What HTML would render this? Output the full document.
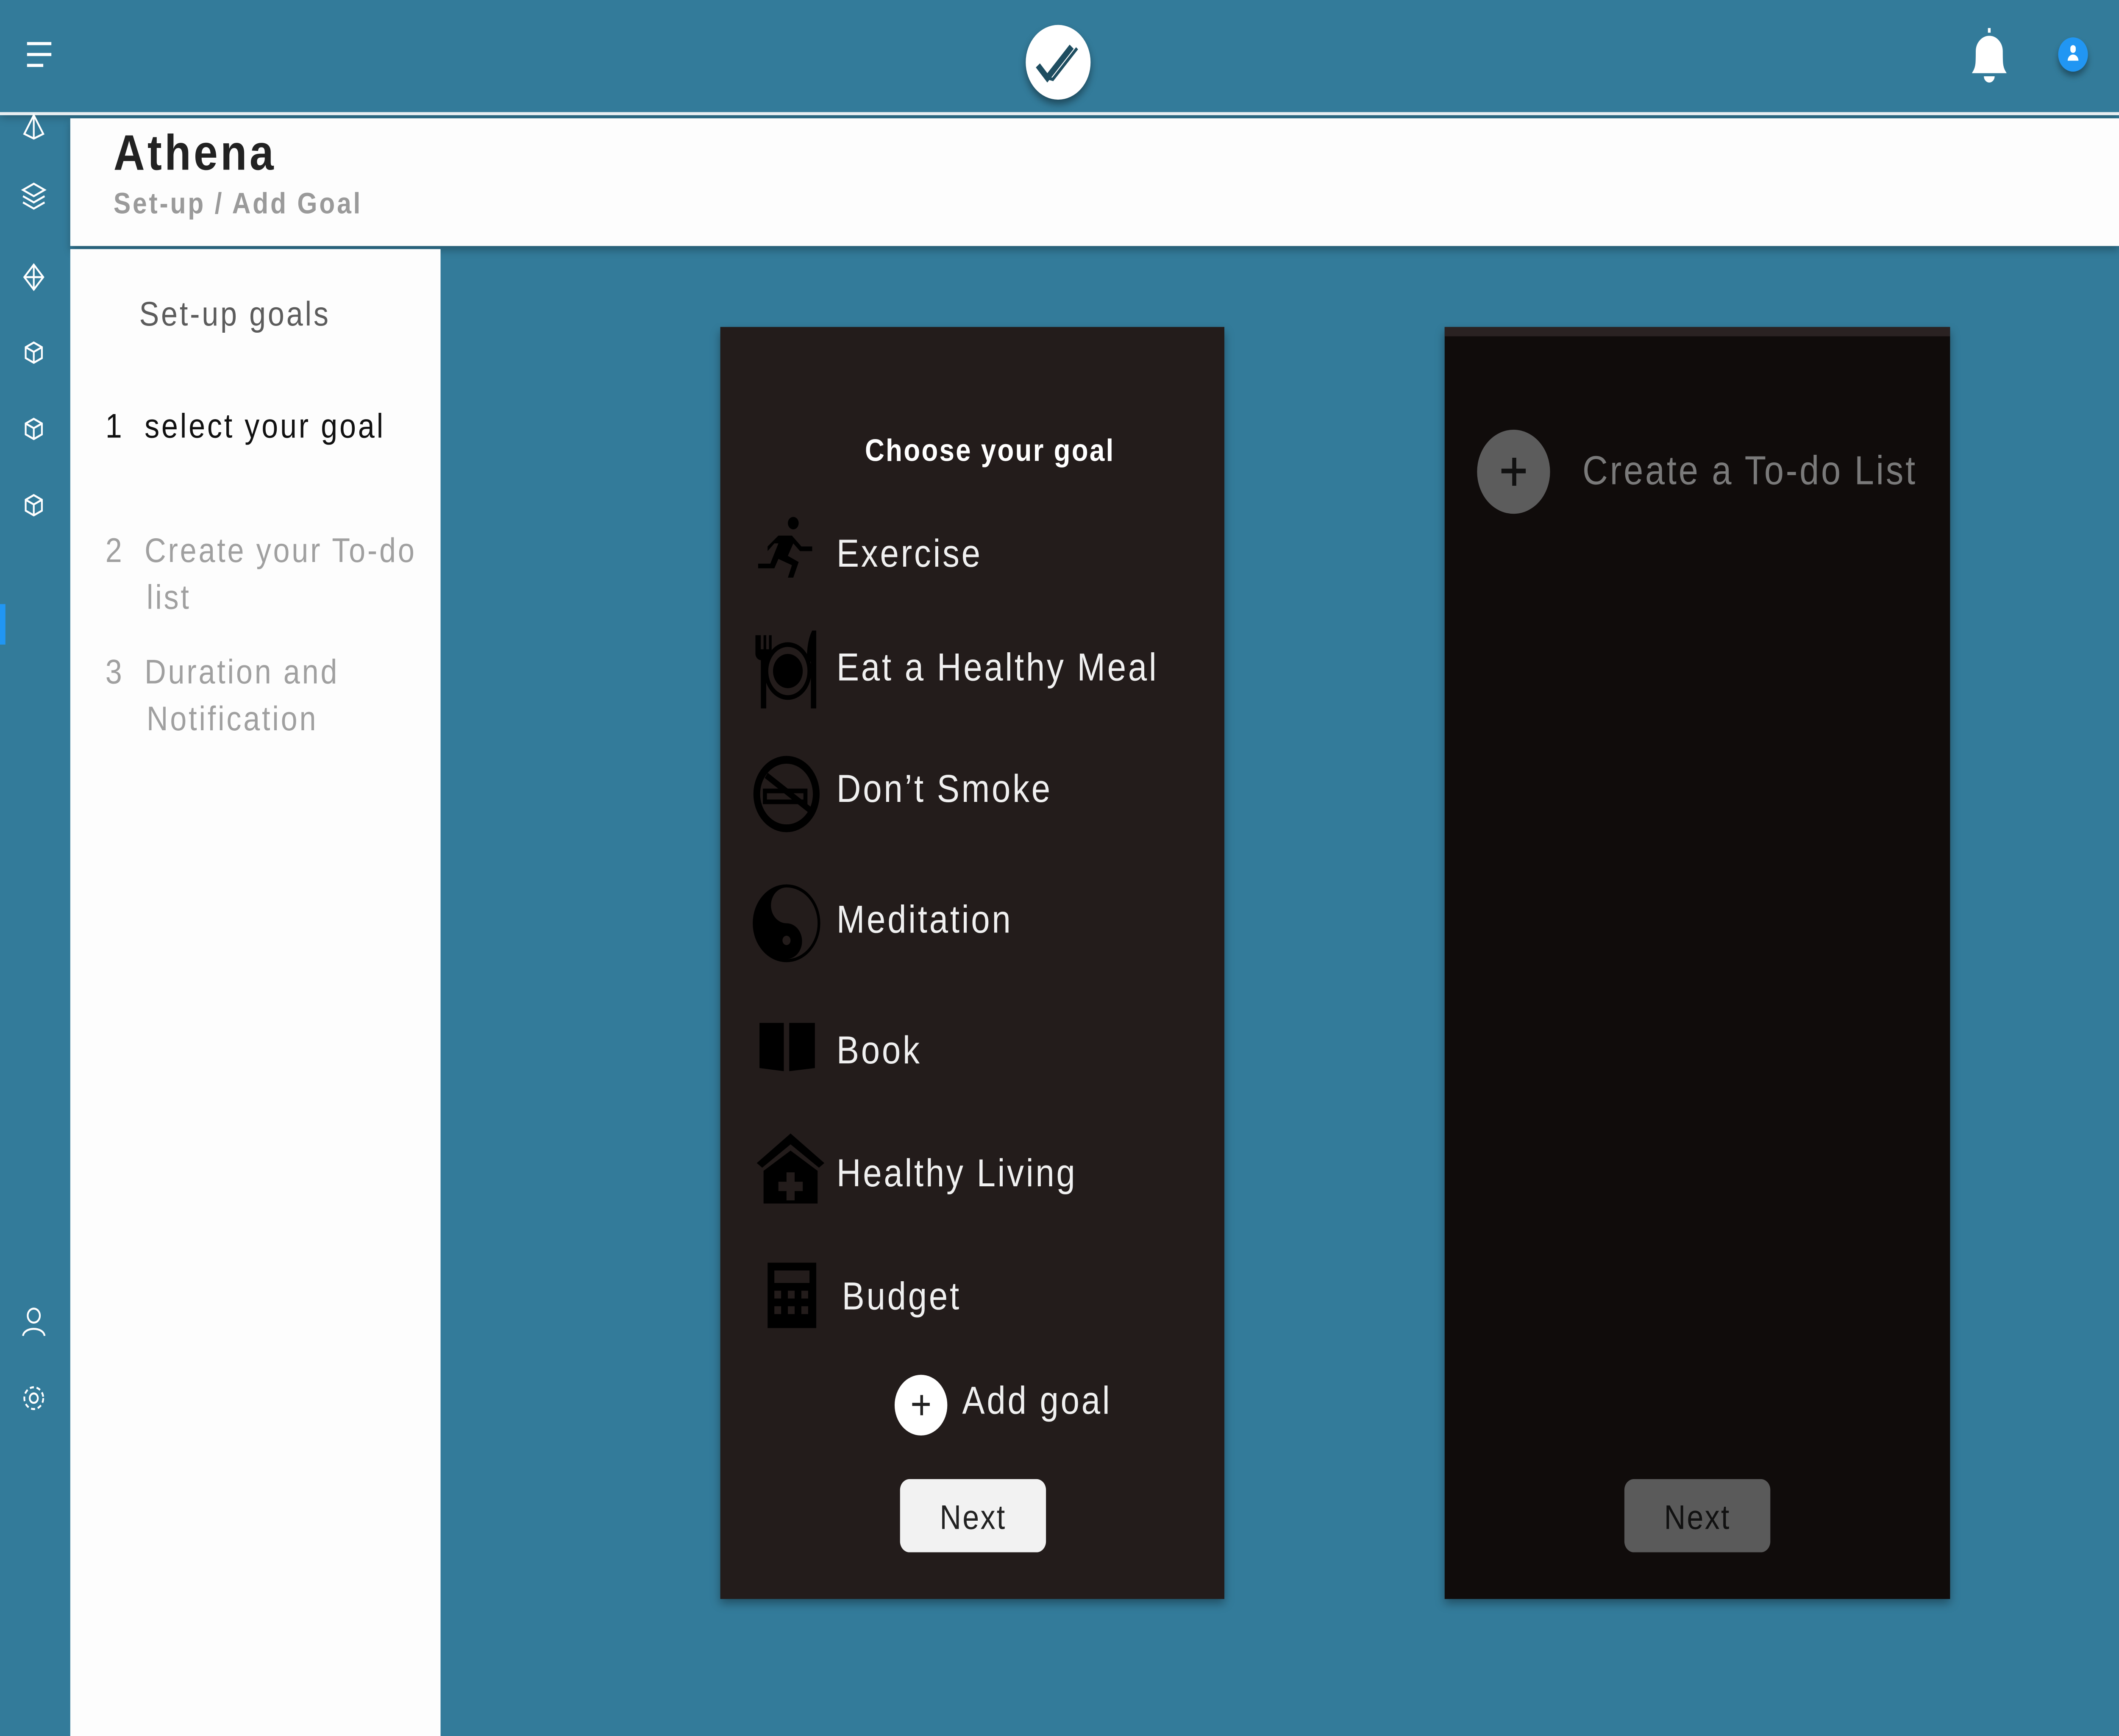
<!DOCTYPE html>
<html><head><meta charset="utf-8"><style>
html,body{margin:0;padding:0;width:100vw;height:100vh;overflow:hidden;background:#337b9a}
#w{position:absolute;left:0;top:0;width:1568px;height:1115px;transform:scale(3.67347);transform-origin:0 0;font-family:"Liberation Sans","DejaVu Sans",sans-serif;background:#337b9a}
.a{position:absolute}
.t{letter-spacing:1.5px;white-space:nowrap}
</style></head><body><div id="w">
<div class="a" style="left:0;top:0;width:1568px;height:72px;background:#337b9a;box-shadow:0 3px 6px rgba(0,0,0,.3)"></div>
<div class="a" style="left:0;top:72px;width:1568px;height:2px;background:#e8eef1"></div>
<div class="a" style="left:20px;top:27px;width:18px;height:2px;background:#fff"></div>
<div class="a" style="left:20px;top:34px;width:18px;height:2px;background:#fff"></div>
<div class="a" style="left:20px;top:41px;width:12px;height:2px;background:#fff"></div>
<div class="a" style="left:759px;top:16px;width:48px;height:48px;border-radius:50%;background:#fff;box-shadow:0 3px 5px rgba(0,0,0,.4)"></div>
<svg class="a" style="left:759px;top:16px" width="48" height="48" viewBox="0 0 48 48"><path d="M9 26l7 8 18-20" fill="none" stroke="#1e4d60" stroke-width="4"/><path d="M16 34l4 1 18-20" fill="none" stroke="#1e4d60" stroke-width="2"/></svg>
<svg class="a" style="left:1455px;top:16px" width="34" height="40" viewBox="0 0 34 40"><path d="M17 2v3M6 30c2-3 2-6 2-13a9 9 0 0 1 18 0c0 7 0 10 2 13z" fill="#fff" stroke="#fff" stroke-width="2"/><path d="M13 33h8a4 4 0 0 1-8 0z" fill="#fff"/></svg>
<div class="a" style="left:1523px;top:24px;width:22px;height:22px;border-radius:50%;background:#2196f3;box-shadow:0 3px 4px rgba(0,0,0,.35)"></div>
<div class="a" style="left:1532px;top:29px;width:4px;height:5px;border-radius:2px;background:#fff"></div>
<div class="a" style="left:1530px;top:35px;width:8px;height:4px;border-radius:4px 4px 0 0;background:#fff"></div>
<svg class="a" style="left:0;top:72px" width="50" height="860" viewBox="0 0 50 860" fill="none" stroke="#fff" stroke-width="1.3">
<path d="M25 2l-7 12 7 3 7-3z M25 2v15"/>
<path d="M25 46l-8 4 8 4 8-4z M17 54l8 4 8-4 M17 58l8 4 8-4"/>
<path d="M25 98l-7 8 7 8 7-8z M18 106h14 M25 98v16"/>
<path d="M25 148l-6 3v7l6 3 6-3v-7z M19 151l6 3 6-3 M25 154v7"/>
<path d="M25 197l-6 3v7l6 3 6-3v-7z M19 200l6 3 6-3 M25 203v7"/>
<path d="M25 246l-6 3v7l6 3 6-3v-7z M19 249l6 3 6-3 M25 252v7"/>
<circle cx="25" cy="773" r="4.5"/><path d="M17 786c1-6 15-6 16 0"/>
<circle cx="25" cy="826" r="3"/><circle cx="25" cy="826" r="7" stroke-dasharray="3 2"/>
</svg>
<div class="a" style="left:0;top:388px;width:4px;height:26px;background:#2196f3"></div>
<div class="a" style="left:52px;top:76px;width:1516px;height:82px;background:#fdfdfd;box-shadow:0 3px 5px rgba(0,0,0,.25)"></div>
<div class="a t" style="left:84px;top:80px;font-size:32px;font-weight:bold;color:#222;letter-spacing:2px">Athena</div>
<div class="a t" style="left:84px;top:121px;font-size:19px;font-weight:bold;color:#9a9a9a">Set-up / Add Goal</div>
<div class="a" style="left:52px;top:160px;width:274px;height:955px;background:#fdfdfd"></div>
<div class="a t" style="left:103px;top:189px;font-size:22px;color:#5c5c5c">Set-up goals</div>
<div class="a t" style="left:78px;top:261px;font-size:22px;color:#111">1&nbsp;&nbsp;select your goal</div>
<div class="a t" style="left:78px;top:339px;font-size:22px;color:#a0a0a0;line-height:30px">2&nbsp;&nbsp;Create your To-do<br>&nbsp;&nbsp;&nbsp;&nbsp;list</div>
<div class="a t" style="left:78px;top:417px;font-size:22px;color:#a0a0a0;line-height:30px">3&nbsp;&nbsp;Duration and<br>&nbsp;&nbsp;&nbsp;&nbsp;Notification</div>
<div class="a" style="left:533px;top:210px;width:373px;height:817px;background:#231c1b;box-shadow:0 3px 6px rgba(0,0,0,.35)"></div>
<div class="a t" style="left:640px;top:279px;font-size:20px;font-weight:bold;color:#fff;letter-spacing:1px">Choose your goal</div>
<svg class="a" style="left:556px;top:330px" width="60" height="540" viewBox="0 0 60 540" fill="#000">
<circle cx="31" cy="6" r="4"/><path d="M12 21l8-7h10l7 7 8 0v3h-9l-5-5-4 8 8 4-4 10h-4l3-8-10-4-3 6H5v-3h9l6-13h-3l-5 5z"/>
<path d="M3 78v12c0 2 2 4 4 4v31h4V94c2 0 4-2 4-4V78h-2v9h-2v-9h-2v9h-2v-9z"/><ellipse cx="27" cy="101" rx="16" ry="17" fill="none" stroke="#000" stroke-width="3"/><circle cx="27" cy="101" r="11"/><path d="M45 75c-3 5-4 12-4 20h3v30h4V75z"/>
<circle cx="26" cy="180" r="22" fill="none" stroke="#000" stroke-width="5"/><path d="M11 168l32 22" stroke="#000" stroke-width="4"/><rect x="10" y="178" width="30" height="7" fill="none" stroke="#000" stroke-width="3"/>
<circle cx="26" cy="263" r="25"/><path d="M26 240a11 11 0 0 0 0 23 11 11 0 0 1 0 23 23 23 0 0 0 0-46z" fill="#231c1b"/><circle cx="26" cy="252" r="3" fill="#231c1b"/><circle cx="26" cy="274" r="3" fill="#231c1b"/>
<path d="M6 327h18v31l-18-2zM28 327h19v29l-19 2z"/>
<path d="M29 398l-25 19 4 3 21-15 21 15 4-3z M9 422l20-13 20 13v21H9z"/><path d="M26 423h6v6h6v6h-6v6h-6v-6h-6v-6h6z" fill="#231c1b"/>
<path d="M12 481h36v42H12z"/><g fill="#231c1b"><rect x="17" y="486" width="26" height="8"/><rect x="17" y="499" width="5" height="5"/><rect x="27" y="499" width="5" height="5"/><rect x="37" y="499" width="5" height="5"/><rect x="17" y="509" width="5" height="5"/><rect x="27" y="509" width="5" height="5"/><rect x="37" y="509" width="5" height="5"/></g>
</svg>
<div class="a t" style="left:619px;top:342px;font-size:25px;color:#f0f0f0">Exercise</div>
<div class="a t" style="left:619px;top:415px;font-size:25px;color:#f0f0f0">Eat a Healthy Meal</div>
<div class="a t" style="left:619px;top:493px;font-size:25px;color:#f0f0f0">Don’t Smoke</div>
<div class="a t" style="left:619px;top:577px;font-size:25px;color:#f0f0f0">Meditation</div>
<div class="a t" style="left:619px;top:661px;font-size:25px;color:#f0f0f0">Book</div>
<div class="a t" style="left:619px;top:740px;font-size:25px;color:#f0f0f0">Healthy Living</div>
<div class="a t" style="left:623px;top:819px;font-size:25px;color:#f0f0f0">Budget</div>
<div class="a" style="left:662px;top:883px;width:39px;height:39px;border-radius:50%;background:#fff"></div>
<div class="a" style="left:675px;top:901px;width:13px;height:2px;background:#222"></div>
<div class="a" style="left:680.5px;top:896px;width:2px;height:13px;background:#222"></div>
<div class="a t" style="left:712px;top:886px;font-size:25px;color:#f0f0f0">Add goal</div>
<div class="a" style="left:666px;top:950px;width:108px;height:47px;border-radius:7px;background:#f2f2f2;text-align:center;line-height:50px;font-size:22px;color:#222;letter-spacing:1px">Next</div>
<div class="a" style="left:1069px;top:210px;width:374px;height:817px;background:#100c0b;box-shadow:0 3px 6px rgba(0,0,0,.35)"></div>
<div class="a" style="left:1069px;top:210px;width:374px;height:6px;background:#2a2222"></div>
<div class="a" style="left:1093px;top:276px;width:54px;height:54px;border-radius:50%;background:#5c5c5c"></div>
<div class="a" style="left:1111px;top:301px;width:18px;height:3px;background:#111"></div>
<div class="a" style="left:1118.5px;top:294px;width:3px;height:18px;background:#111"></div>
<div class="a t" style="left:1171px;top:287px;font-size:26px;color:#7a7a7a">Create a To-do List</div>
<div class="a" style="left:1202px;top:950px;width:108px;height:47px;border-radius:7px;background:#5a5a5a;text-align:center;line-height:50px;font-size:22px;color:#111;letter-spacing:1px">Next</div>
</div>
<script>
(function(){var w=document.getElementById('w');function f(){var sx=(window.innerWidth||document.documentElement.clientWidth)/1568,sy=(window.innerHeight||document.documentElement.clientHeight)/1115;if(sx>0&&sy>0)w.style.transform='scale('+sx+','+sy+')';}f();window.addEventListener('resize',f);})();
</script>
</body></html>
